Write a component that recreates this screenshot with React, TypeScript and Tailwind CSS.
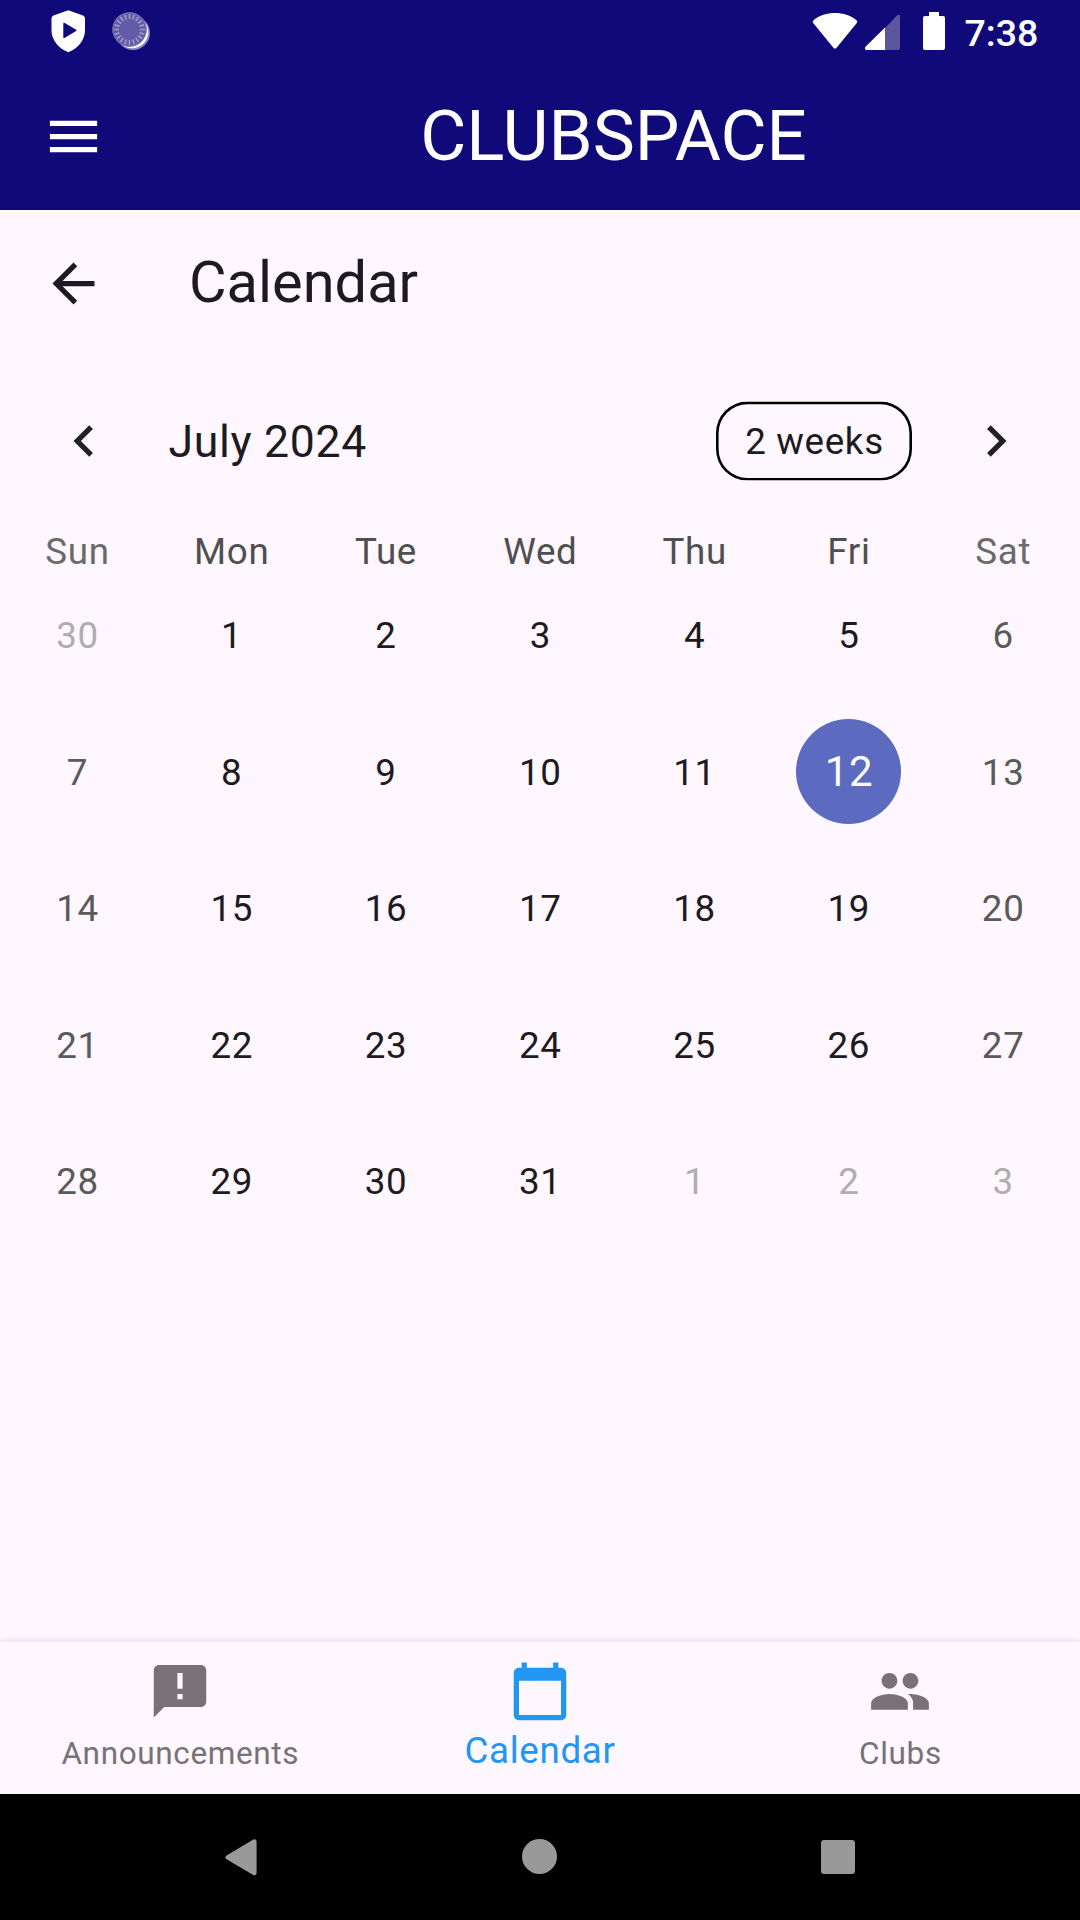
import React from "react";

const WEEKDAYS = ["Sun", "Mon", "Tue", "Wed", "Thu", "Fri", "Sat"];
const WEEKS = [
  [30, 1, 2, 3, 4, 5, 6],
  [7, 8, 9, 10, 11, 12, 13],
  [14, 15, 16, 17, 18, 19, 20],
  [21, 22, 23, 24, 25, 26, 27],
  [28, 29, 30, 31, 1, 2, 3],
];

function Icon({ d, className = "size-[63px]", box = "0 0 24 24" }: { d: string; className?: string; box?: string }) {
  return (
    <svg viewBox={box} className={`shrink-0 ${className}`} fill="currentColor">
      <path d={d} />
    </svg>
  );
}

// A 64px canvas that keeps the glyph at 63px, centred on half pixels.
const HALF_PIXEL_BOX = "-0.19 -0.19 24.38 24.38";
const NAV_BOX = "-0.19 -0.3 24.38 24.38";

function StatusBar() {
  const ticks = Array.from({ length: 20 }, (_, i) => i * 18);
  return (
    <div className="flex h-[63px] items-start justify-between text-white">
      <svg className="h-[63px] w-[200px]" viewBox="0 0 200 63">
        <path
          d="M68.3 10.3L83 15.6Q85 16.4 85 18.6V30C85 40 78.5 48 68.3 52.3C58 48 51.5 40 51.5 30V18.6Q51.5 16.4 53.5 15.6Z"
          fill="#fff"
        />
        <path d="M64 23.4L75.8 30.3L64 37.4Z" fill="#100979" stroke="#100979" strokeWidth="1.4" strokeLinejoin="round" />
        <circle cx="133" cy="33" r="17" fill="#8d88bd" />
        <circle cx="132" cy="32" r="16.2" fill="#fff" />
        <circle cx="129.5" cy="29.5" r="17.2" fill="#625ba8" />
        <g stroke="#a5a1cd" strokeWidth="1.4">
          {ticks.map((a) => (
            <line key={a} x1="129.5" y1="14" x2="129.5" y2="19" transform={`rotate(${a} 129.5 29.5)`} />
          ))}
        </g>
        <circle cx="129.5" cy="29.5" r="16.6" fill="none" stroke="#7a74b3" strokeWidth="1" />
      </svg>
      <div className="flex h-[63px]">
        <svg className="h-[63px] w-[150px]" viewBox="0 0 150 63">
          <path d="M13.5 20.2C25 10.5 45 10.5 56.5 20.2Q58 21.3 56.8 23L37 47.3Q35 50 33 47.3L13.2 23Q12 21.3 13.5 20.2Z" fill="#fff" />
          <path d="M85 28L96.5 16Q100 13.2 100 16.5V48Q100 50 98 50H85Z" fill="#5c569f" />
          <path d="M85 27.5V50H66.5Q65 50 65 48.5V47.3Z" fill="#fff" />
          <path d="M129 12H139V16H143Q145 16 145 18V48Q145 50 143 50H125Q123 50 123 48V18Q123 16 125 16H129Z" fill="#fff" />
        </svg>
        <span className="w-[130px] pl-[14.5px] text-[37.5px] leading-[66px] font-medium">7:38</span>
      </div>
    </div>
  );
}

function dayColor(row: number, col: number, day: number) {
  const outside = (row === 0 && day > 20) || (row === 4 && day < 10);
  if (outside) return "text-[#aeaeae]";
  return col === 0 || col === 6 ? "text-[#5a5a5a]" : "text-[#1d1b20]";
}

export default function App() {
  return (
    <div
      className="flex h-[1920px] w-[1080px] flex-col overflow-hidden bg-[#fef7ff] text-[#1d1b20] antialiased"
      style={{ fontFamily: "Roboto, sans-serif" }}
    >
      <header className="h-[210px] bg-[#100979] text-white">
        <StatusBar />
        <div className="flex h-[147px] items-center px-[42px]">
          <Icon d="M3 18h18v-2H3v2zm0-5h18v-2H3v2zm0-7v2h18V6H3z" />
          <h1 className="ml-[84px] flex-1 pb-[2px] text-center text-[70.875px] leading-[84px] font-normal">CLUBSPACE</h1>
        </div>
      </header>

      <main className="flex flex-1 flex-col">
        <div className="flex h-[147px] items-center pl-[42px]">
          <Icon d="M20 11H7.83l5.59-5.59L12 4l-8 8 8 8 1.41-1.41L7.83 13H20v-2z" />
          <h2 className="ml-[84px] pb-[3px] text-[57.75px] leading-[72px] font-normal">Calendar</h2>
        </div>

        <div className="flex h-[168px] items-center px-[52px] tracking-[0.656px]">
          <Icon
            box={HALF_PIXEL_BOX}
            className="size-[64px] text-[#212121]"
            d="M15.41 7.41L14 6l-6 6 6 6 1.41-1.41L10.83 12z"
          />
          <span className="ml-[52.5px] flex-1 pt-[2px] text-[44.625px] leading-[64px]">July 2024</span>
          <button className="mr-[52px] flex h-[79px] w-[196px] -translate-y-[0.4px] items-center justify-center rounded-[31.5px] pt-[2px] pl-px text-[36.75px] shadow-[inset_0_0_0_2.6px_#000]">
            2 weeks
          </button>
          <Icon
            box={HALF_PIXEL_BOX}
            className="size-[64px] text-[#212121]"
            d="M10 6L8.59 7.41 13.17 12l-4.58 4.59L10 18l6-6z"
          />
        </div>

        <div className="grid h-[42px] grid-cols-7 text-center text-[36.75px] leading-[54px] tracking-[0.656px]">
          {WEEKDAYS.map((name, i) => (
            <span key={name} className={i === 0 || i === 6 ? "pl-[0.7px] text-[#6a6a6a]" : "pl-[0.7px] text-[#4f4f4f]"}>
              {name}
            </span>
          ))}
        </div>

        {WEEKS.map((week, row) => (
          <div key={row} className="grid h-[136.5px] grid-cols-7 tracking-[0.656px]">
            {week.map((day, col) => (
              <div key={col} className="flex items-center justify-center">
                {day === 12 ? (
                  <span className="flex size-[105px] items-center justify-center rounded-full bg-[#5c6bc0] pl-px text-[42px] text-[#fafafa]">
                    12
                  </span>
                ) : (
                  <span className={`pt-[0.7px] pl-[0.6px] text-[36.75px] ${dayColor(row, col, day)}`}>{day}</span>
                )}
              </div>
            ))}
          </div>
        ))}
      </main>

      <nav className="grid h-[152px] grid-cols-3 text-[#787276] shadow-[0_-1px_6px_rgba(0,0,0,0.12)]">
        <div className="flex flex-col items-center pt-[17px]">
          <Icon
            box={NAV_BOX}
            className="size-[64px]"
            d="M20 2H4c-1.1 0-1.99.9-1.99 2L2 22l4-4h14c1.1 0 2-.9 2-2V4c0-1.1-.9-2-2-2zm-7 9h-2V5h2v6zm0 4h-2v-2h2v2z"
          />
          <span className="mt-[5.5px] pl-[0.6px] text-[31.5px] leading-[50px] tracking-[0.63px]">Announcements</span>
        </div>
        <div className="flex flex-col items-center pt-[17px] text-[#2196f3]">
          <Icon
            box={NAV_BOX}
            className="size-[64px]"
            d="M20 3h-1V1h-2v2H7V1H5v2H4c-1.1 0-2 .9-2 2v16c0 1.1.9 2 2 2h16c1.1 0 2-.9 2-2V5c0-1.1-.9-2-2-2zm0 18H4V8h16v13z"
          />
          <span className="mt-[2.5px] text-[36.75px] leading-[50px] tracking-[0.656px]">Calendar</span>
        </div>
        <div className="flex flex-col items-center pt-[17px]">
          <Icon
            box={NAV_BOX}
            className="size-[64px]"
            d="M16 11c1.66 0 2.99-1.34 2.99-3S17.66 5 16 5c-1.66 0-3 1.34-3 3s1.34 3 3 3zm-8 0c1.66 0 2.99-1.34 2.99-3S9.66 5 8 5C6.34 5 5 6.34 5 8s1.34 3 3 3zm0 2c-2.33 0-7 1.17-7 3.5V19h14v-2.5c0-2.33-4.67-3.5-7-3.5zm8 0c-.29 0-.62.02-.97.05 1.16.84 1.97 1.97 1.97 3.45V19h6v-2.5c0-2.33-4.67-3.5-7-3.5z"
          />
          <span className="mt-[5.5px] pl-px text-[31.5px] leading-[50px] tracking-[0.656px]">Clubs</span>
        </div>
      </nav>

      <footer className="flex h-[126px] items-start bg-black pt-[44px] text-[#999]">
        <svg className="ml-[224px] h-[38px] w-[36px]" viewBox="0 0 36 38">
          <path d="M3.7 19.3L30.4 3.5V35Z" fill="currentColor" stroke="currentColor" strokeWidth="4.4" strokeLinejoin="round" />
        </svg>
        <div className="mt-[1px] ml-[262px] size-[35px] rounded-full bg-[#999]" />
        <div className="mt-[2px] ml-[264px] size-[33.5px] rounded-[3px] bg-[#999]" />
      </footer>
    </div>
  );
}
